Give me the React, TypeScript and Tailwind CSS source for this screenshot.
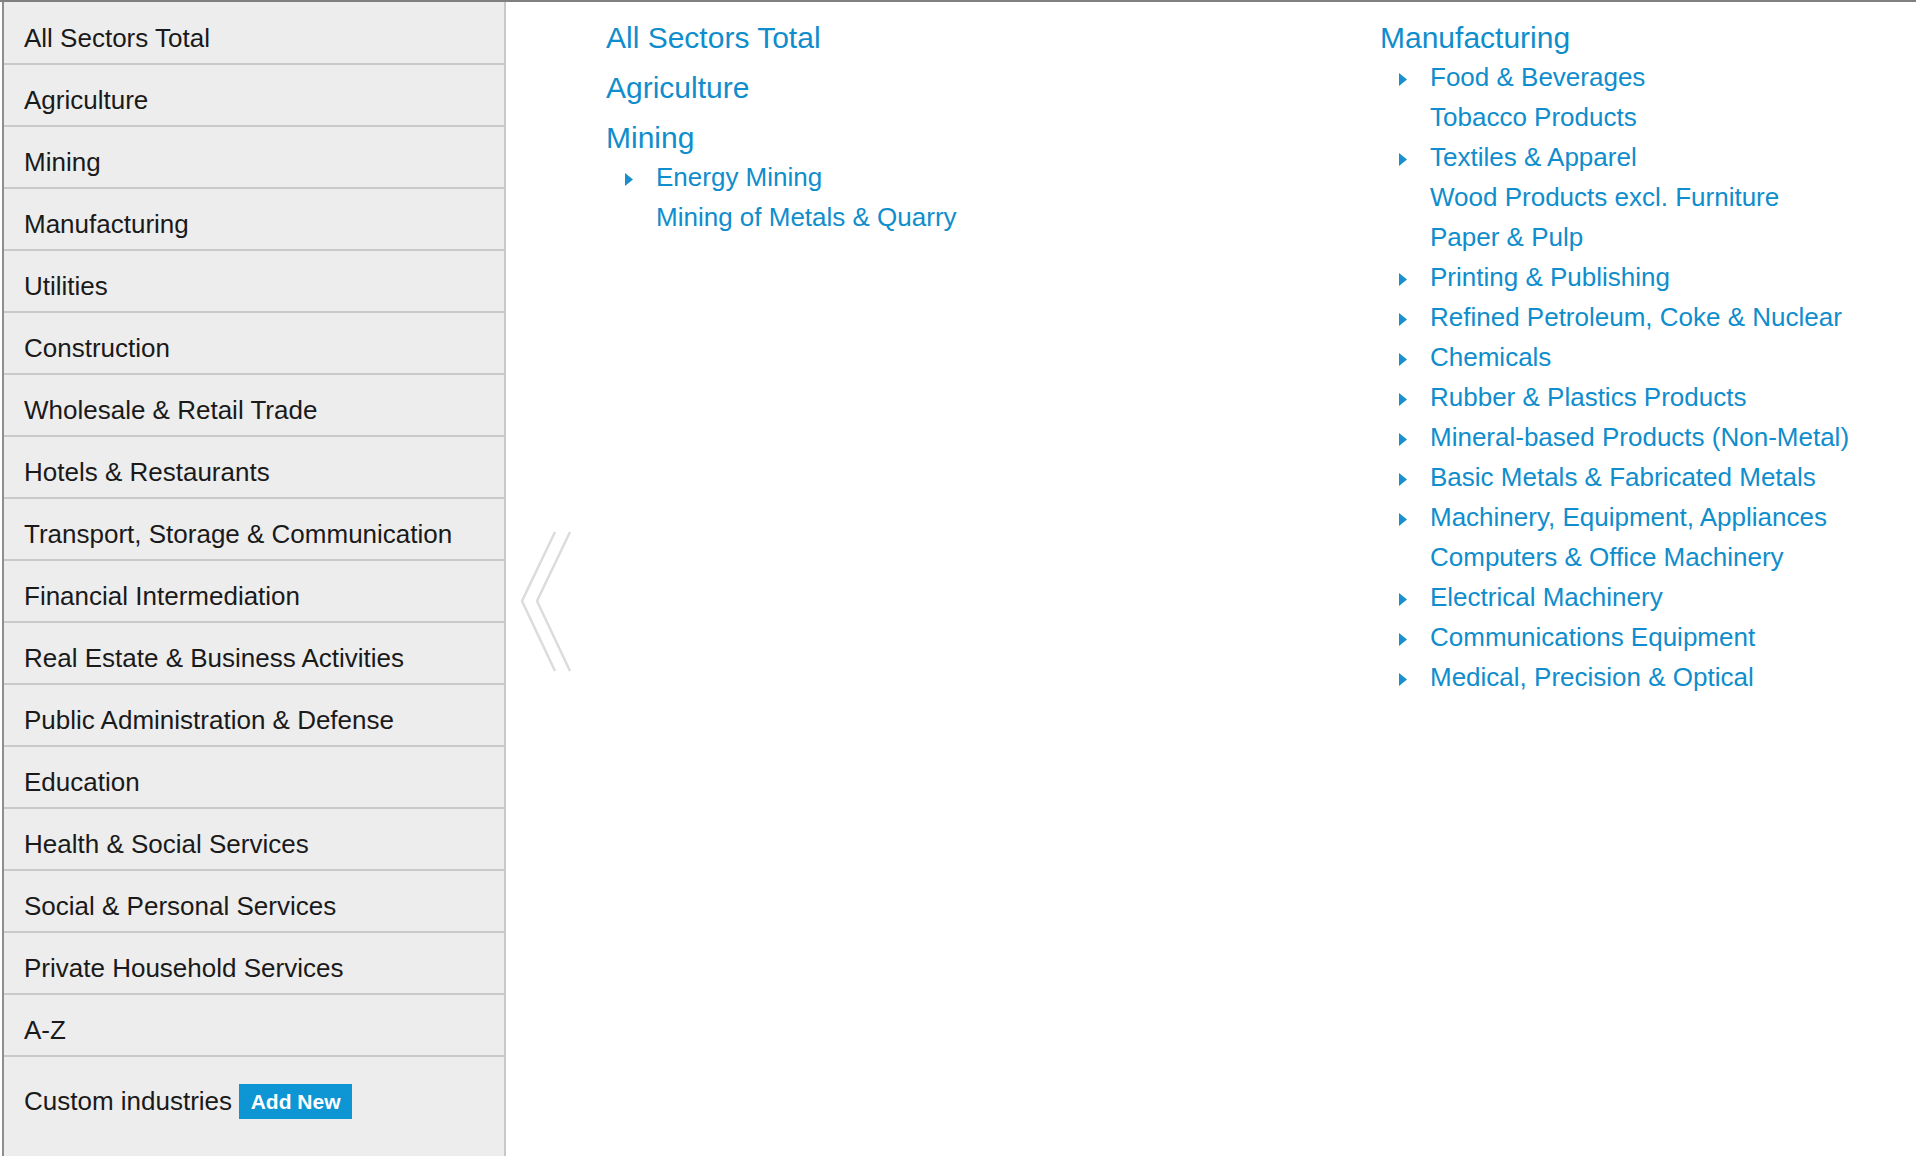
import React from "react";

const sectors = [
  "All Sectors Total",
  "Agriculture",
  "Mining",
  "Manufacturing",
  "Utilities",
  "Construction",
  "Wholesale & Retail Trade",
  "Hotels & Restaurants",
  "Transport, Storage & Communication",
  "Financial Intermediation",
  "Real Estate & Business Activities",
  "Public Administration & Defense",
  "Education",
  "Health & Social Services",
  "Social & Personal Services",
  "Private Household Services",
  "A-Z",
];

type Sub = { label: string; expandable: boolean };
type Group = { title: string; children: Sub[] };

const leftGroups: Group[] = [
  { title: "All Sectors Total", children: [] },
  { title: "Agriculture", children: [] },
  {
    title: "Mining",
    children: [
      { label: "Energy Mining", expandable: true },
      { label: "Mining of Metals & Quarry", expandable: false },
    ],
  },
];

const rightGroups: Group[] = [
  {
    title: "Manufacturing",
    children: [
      { label: "Food & Beverages", expandable: true },
      { label: "Tobacco Products", expandable: false },
      { label: "Textiles & Apparel", expandable: true },
      { label: "Wood Products excl. Furniture", expandable: false },
      { label: "Paper & Pulp", expandable: false },
      { label: "Printing & Publishing", expandable: true },
      { label: "Refined Petroleum, Coke & Nuclear", expandable: true },
      { label: "Chemicals", expandable: true },
      { label: "Rubber & Plastics Products", expandable: true },
      { label: "Mineral-based Products (Non-Metal)", expandable: true },
      { label: "Basic Metals & Fabricated Metals", expandable: true },
      { label: "Machinery, Equipment, Appliances", expandable: true },
      { label: "Computers & Office Machinery", expandable: false },
      { label: "Electrical Machinery", expandable: true },
      { label: "Communications Equipment", expandable: true },
      { label: "Medical, Precision & Optical", expandable: true },
    ],
  },
];

function Arrow() {
  return (
    <svg width="8" height="13" viewBox="0 0 8 13" className="mt-[4px]">
      <polygon points="0,0 8,6.5 0,13" fill="#1790cb" />
    </svg>
  );
}

function GroupList({ groups }: { groups: Group[] }) {
  return (
    <div className="flex flex-col">
      {groups.map((g) => (
        <div key={g.title}>
          <a href="#" className="block text-[30px] leading-[50px] text-[#0f8dcc]">
            {g.title}
          </a>
          {g.children.length > 0 && (
            <ul className="-mt-[6px]">
              {g.children.map((c) => (
                <li key={c.label} className="flex items-center h-[40px]">
                  <span className="w-[50px] pl-[19px] flex items-center">
                    {c.expandable && <Arrow />}
                  </span>
                  <a href="#" className="text-[26px] leading-[40px] text-[#0f8dcc]">
                    {c.label}
                  </a>
                </li>
              ))}
            </ul>
          )}
        </div>
      ))}
    </div>
  );
}

export default function App() {
  return (
    <div className="min-h-screen flex flex-col bg-white font-['Liberation_Sans',Arial,sans-serif]">
      <div className="h-[2px] bg-[#808080]" />
      <div className="flex flex-1">
        {/* Sidebar */}
        <aside className="ml-[2px] w-[504px] shrink-0 border-l-2 border-l-[#8e8e8e] border-r-2 border-r-[#c8c8c8] bg-[#ededed] pt-px">
          {sectors.map((s) => (
            <div
              key={s}
              className="h-[62px] border-b-2 border-[#c9c9c9] pl-[20px] pt-[20px] text-[26px] leading-[31px] text-[#1a1a1a]"
            >
              {s}
            </div>
          ))}
          <div className="flex items-center gap-[7px] pl-[20px] pt-[27px]">
            <span className="text-[26px] leading-[31px] text-[#1a1a1a]">Custom industries</span>
            <button className="h-[35px] w-[113px] bg-[#0e95d3] text-white text-[21px] font-bold">
              Add New
            </button>
          </div>
        </aside>

        {/* Collapse */}
        <div className="w-[100px] shrink-0 pt-[529px] pl-[13px]">
          <svg width="54" height="142" viewBox="0 0 54 142" fill="none">
            <polyline points="36,1 3,70 36,140" stroke="#dcdcdc" strokeWidth="2.5" />
            <polyline points="51,1 18,70 51,140" stroke="#dcdcdc" strokeWidth="2.5" />
          </svg>
        </div>

        {/* Content */}
        <div className="w-[774px] shrink-0 pt-[11px]">
          <GroupList groups={leftGroups} />
        </div>
        <div className="flex-1 pt-[11px]">
          <GroupList groups={rightGroups} />
        </div>
      </div>
    </div>
  );
}
